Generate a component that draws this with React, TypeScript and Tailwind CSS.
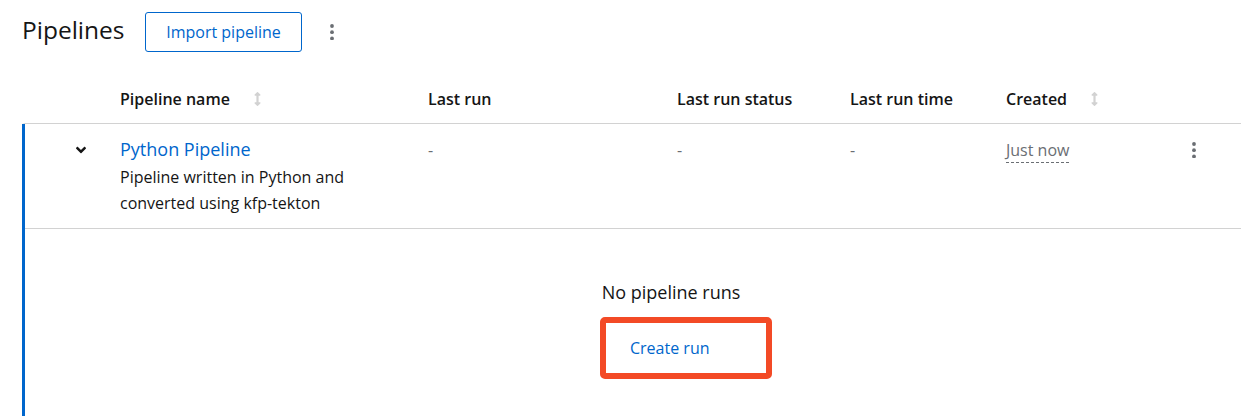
import React from "react";

const SortIcon = () => (
  <svg width="7" height="16" viewBox="0 0 256 512" className="fill-[#d2d2d2]">
    <path d="M214.059 377.941H168V134.059h46.059c21.382 0 32.09-25.851 16.971-40.971L144.971 7.029c-9.373-9.373-24.568-9.373-33.941 0L24.971 93.088c-15.119 15.119-4.411 40.971 16.971 40.971H88v243.882H41.941c-21.382 0-32.090 25.851-16.971 40.971l86.059 86.059c9.373 9.373 24.568 9.373 33.941 0l86.059-86.059c15.12-15.119 4.412-40.971-16.97-40.971z" />
  </svg>
);

const Kebab = () => (
  <svg width="4" height="16" viewBox="0 0 4 16" className="fill-[#6a6e73]">
    <circle cx="2" cy="2" r="1.9" />
    <circle cx="2" cy="8.2" r="1.9" />
    <circle cx="2" cy="14.4" r="1.9" />
  </svg>
);

const Chevron = () => (
  <svg width="10" height="16" viewBox="0 0 320 512" className="fill-[#151515]">
    <path d="M143 352.3L7 216.3c-9.4-9.4-9.4-24.6 0-33.9l22.6-22.6c9.4-9.4 24.6-9.4 33.9 0l96.4 96.4 96.4-96.4c9.4-9.4 24.6-9.4 33.9 0l22.6 22.6c9.4 9.4 9.4 24.6 0 33.9l-136 136c-9.2 9.4-24.4 9.4-33.8 0z" />
  </svg>
);

export default function App() {
  return (
    <div className="w-[1241px] h-[416px] overflow-hidden bg-white text-[#151515] font-['Open_Sans',sans-serif]">
      {/* Top bar */}
      <div className="flex items-center h-[64px] pl-[22px]">
        <h1 className="w-[103px] text-[24.5px] leading-[30px] font-normal -mt-[5px] whitespace-nowrap">Pipelines</h1>
        <button className="ml-[20px] h-[40px] w-[157px] border border-[#0066cc] rounded-[3px] text-[#0066cc] text-[16px] leading-[24px]">
          Import pipeline
        </button>
        <div className="ml-[28px] flex items-center">
          <Kebab />
        </div>
      </div>

      {/* Table */}
      <div className="pl-[22px]">
        {/* Header */}
        <div className="flex items-end h-[60px] pb-[12px] border-b border-[#d2d2d2] border-l-[3px] border-l-transparent text-[16px] leading-[24px] font-semibold">
          <div className="w-[95px]" />
          <div className="w-[308px] flex items-center">
            <span>Pipeline name</span>
            <span className="ml-[24px] flex items-center"><SortIcon /></span>
          </div>
          <div className="w-[249px]">Last run</div>
          <div className="w-[173px]">Last run status</div>
          <div className="w-[156px]">Last run time</div>
          <div className="flex items-center">
            <span>Created</span>
            <span className="ml-[24px] flex items-center"><SortIcon /></span>
          </div>
        </div>

        {/* Body with blue expanded indicator */}
        <div className="border-l-[3px] border-[#0066cc]">
          <div className="flex border-b border-[#d2d2d2] pt-[12px] pb-[12px]">
            <div className="w-[95px] flex justify-center pl-[16px] pt-[6px] h-[27px]">
              <Chevron />
            </div>
            <div className="w-[308px]">
              <div className="text-[18px] leading-[27px] text-[#0066cc]">Python Pipeline</div>
              <div className="mt-[1px] text-[16px] leading-[26px]">
                Pipeline written in Python and<br />converted using kfp-tekton
              </div>
            </div>
            <div className="w-[249px] pt-[2px] text-[16px] leading-[24px] text-[#6a6e73]">-</div>
            <div className="w-[173px] pt-[2px] text-[16px] leading-[24px] text-[#6a6e73]">-</div>
            <div className="w-[156px] pt-[2px] text-[16px] leading-[24px] text-[#6a6e73]">-</div>
            <div className="w-[186px] pt-[2px] text-[16px] leading-[24px]">
              <span className="text-[#6a6e73] border-b border-dashed border-[#6a6e73] pb-[1px]">Just now</span>
            </div>
            <div className="pt-[6px]">
              <Kebab />
            </div>
          </div>

          {/* Expanded content */}
          <div className="h-[200px] pl-[76px] pt-[50px] flex flex-col items-center">
            <div className="text-[18px] leading-[27px]">No pipeline runs</div>
            <div className="mt-[11px] ml-[30px] w-[172px] h-[62px] border-[6px] border-[#f34a26] rounded-[5px] pl-[24px] flex items-center">
              <span className="text-[16px] leading-[24px] text-[#0066cc]">Create run</span>
            </div>
          </div>
        </div>
      </div>
    </div>
  );
}
